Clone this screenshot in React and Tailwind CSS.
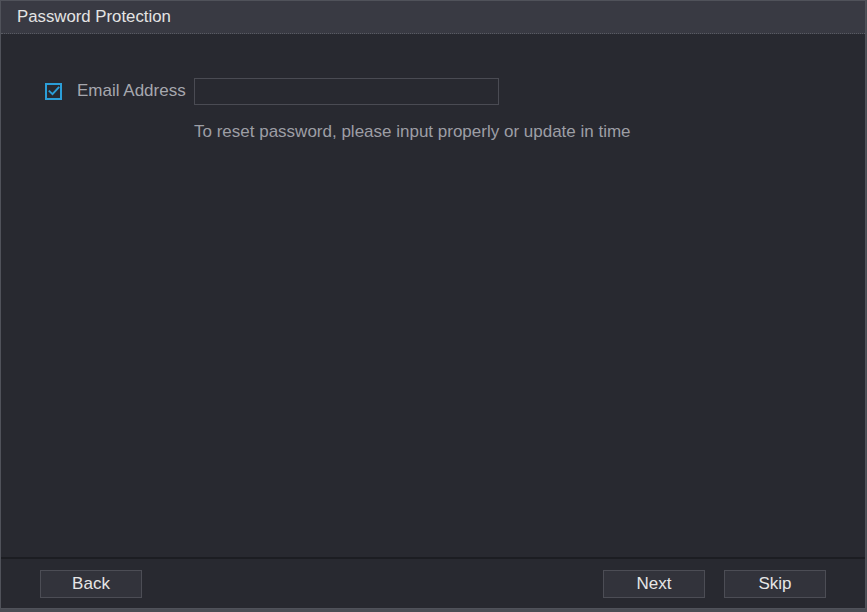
import React from "react";

const font = { fontFamily: '"Liberation Sans", Arial, sans-serif' };

function Checkbox() {
  return (
    <div className="w-[17px] h-[17px] border-2 border-[#2b9ed8] flex items-center justify-center">
      <svg width="12" height="10" viewBox="0 0 12 10" fill="none">
        <path d="M0.8 4.6 L4.5 8.2 L11.2 0.8" stroke="#2b9ed8" strokeWidth="1.9" />
      </svg>
    </div>
  );
}

function Btn({ children }) {
  return (
    <button className="w-[102px] h-[28px] bg-[#32333b] border border-[#4c4d55] text-[#e6e6e6] text-[17px] leading-none flex items-center justify-center">
      {children}
    </button>
  );
}

export default function App() {
  return (
    <div className="w-[867px] h-[612px] bg-[#4a4c54] overflow-hidden" style={font}>
      <div className="w-[866px] h-[609px] border border-[#50525a] flex flex-col bg-[#282930]">
        <div className="h-[33px] bg-[#393a43] border-b border-dotted border-[#595b63] flex items-center pl-[16px] shrink-0">
          <span className="text-[16.8px] text-[#e4e4e4]">Password Protection</span>
        </div>
        <div className="flex-1 pt-[44px]">
          <div className="flex items-center h-[26px]">
            <div className="ml-[44px]">
              <Checkbox />
            </div>
            <span className="ml-[15px] text-[17px] text-[#a6a7ae]">Email Address</span>
            <div className="ml-[8px] w-[305px] h-[27px] border border-[#4a4b53] bg-[#282930]" />
          </div>
          <div className="ml-[193px] mt-[15px] text-[17px] text-[#9d9ea5]">
            To reset password, please input properly or update in time
          </div>
        </div>
        <div className="h-[2px] bg-[#1c1d22] shrink-0" />
        <div className="h-[49px] flex items-center shrink-0">
          <div className="ml-[39px]">
            <Btn>Back</Btn>
          </div>
          <div className="ml-auto flex gap-[19px] mr-[39px]">
            <Btn>Next</Btn>
            <Btn>Skip</Btn>
          </div>
        </div>
      </div>
    </div>
  );
}
